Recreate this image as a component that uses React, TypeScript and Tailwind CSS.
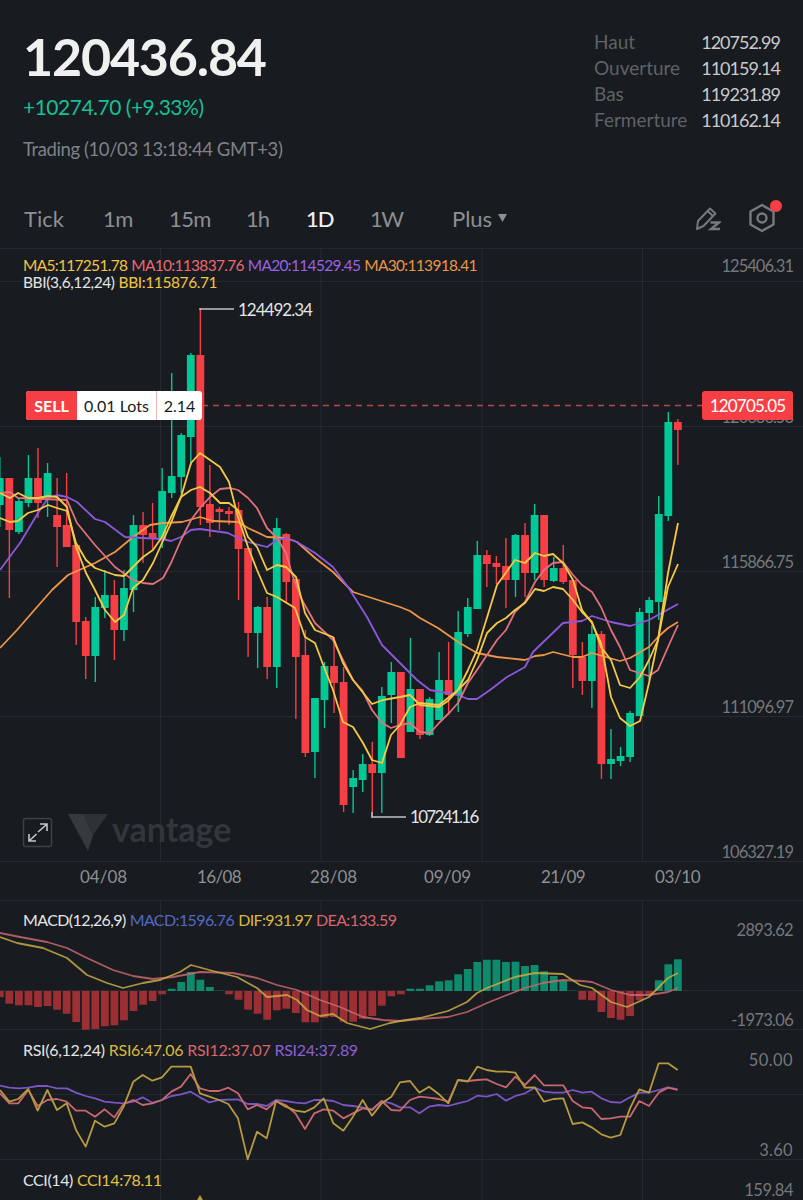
type Pt = [number, number]

// [high, bodyTop, bodyBottom, low, colour] in page pixels, oldest first
const candles: [number, number, number, number, 'g' | 'r'][] = [
  [457, 478, 505, 527, 'g'], [478, 478, 530, 598, 'r'], [499, 501, 532, 534, 'g'], [455, 478, 503, 507, 'g'],
  [448, 478, 503, 518, 'r'], [463, 473, 498, 517, 'g'], [478, 515, 527, 567, 'r'], [473, 525, 547, 547, 'r'],
  [545, 545, 622, 645, 'r'], [617, 621, 656, 679, 'r'], [597, 607, 656, 682, 'g'], [570, 595, 608, 618, 'g'],
  [580, 595, 630, 660, 'r'], [570, 588, 630, 641, 'g'], [515, 525, 590, 612, 'g'], [512, 525, 535, 563, 'r'],
  [503, 533, 538, 550, 'r'], [468, 491, 540, 548, 'g'], [373, 476, 493, 498, 'g'], [433, 435, 477, 493, 'g'],
  [353, 355, 437, 465, 'g'], [308, 355, 507, 525, 'r'], [465, 504, 523, 537, 'r'], [507, 509, 512, 530, 'r'],
  [507, 511, 514, 525, 'r'], [502, 510, 549, 600, 'r'], [548, 548, 633, 657, 'r'], [606, 607, 633, 668, 'g'],
  [597, 607, 667, 679, 'r'], [518, 528, 667, 688, 'g'], [533, 534, 582, 602, 'r'], [579, 579, 657, 719, 'r'],
  [630, 655, 753, 757, 'r'], [698, 698, 752, 778, 'g'], [662, 666, 700, 728, 'g'], [637, 666, 683, 713, 'r'],
  [667, 682, 805, 812, 'r'], [770, 778, 787, 813, 'g'], [754, 764, 780, 792, 'g'], [742, 764, 773, 818, 'r'],
  [687, 696, 773, 813, 'g'], [662, 672, 695, 723, 'g'], [672, 672, 758, 758, 'r'], [638, 689, 732, 732, 'g'],
  [689, 689, 735, 739, 'r'], [697, 699, 735, 736, 'g'], [652, 680, 720, 720, 'g'], [642, 680, 695, 715, 'r'],
  [611, 632, 695, 712, 'g'], [598, 607, 634, 637, 'g'], [541, 555, 609, 609, 'g'], [550, 555, 564, 587, 'r'],
  [556, 563, 567, 584, 'r'], [538, 566, 580, 608, 'r'], [534, 535, 580, 597, 'g'], [523, 535, 573, 597, 'r'],
  [504, 515, 573, 580, 'g'], [515, 515, 580, 587, 'r'], [557, 568, 581, 582, 'g'], [545, 568, 582, 584, 'r'],
  [580, 580, 655, 688, 'r'], [642, 657, 681, 695, 'r'], [625, 634, 681, 708, 'g'], [631, 634, 764, 779, 'r'],
  [729, 759, 764, 779, 'g'], [747, 756, 761, 766, 'g'], [711, 713, 757, 762, 'g'], [608, 612, 716, 716, 'g'],
  [597, 600, 613, 680, 'g'], [496, 514, 602, 620, 'g'], [412, 422, 516, 521, 'g'], [419, 422, 430, 465, 'r'],
]
const candleX = (i: number) => -0.2 + 9.55 * i

const ma5: Pt[] = [[0, 493], [10, 498], [18, 493], [28, 498], [38, 498], [48, 496], [57, 497], [67, 507], [76, 547], [86, 573], [95, 590], [105, 610], [115, 622], [124, 615], [133, 588], [143, 580], [153, 563], [162, 543], [171, 523], [181, 497], [191, 463], [200, 453], [220, 467], [229, 482], [238, 517], [248, 547], [257, 570], [267, 593], [277, 597], [295, 608], [305, 637], [315, 643], [324, 667], [333, 690], [343, 722], [353, 727], [363, 743], [372, 760], [382, 763], [391, 735], [400, 725], [410, 707], [420, 703], [439, 705], [448, 698], [458, 690], [468, 670], [477, 650], [497, 585], [515, 560], [525, 563], [535, 553], [544, 556], [553, 554], [563, 563], [573, 580], [582, 610], [592, 623], [601, 643], [611, 697], [620, 718], [630, 726], [640, 721], [649, 683], [658, 640], [668, 573], [678, 523]]
const bbi: Pt[] = [[0, 518], [10, 522], [18, 521], [28, 513], [38, 510], [48, 505], [57, 508], [67, 511], [76, 543], [86, 560], [95, 568], [115, 575], [124, 576], [133, 567], [143, 557], [153, 550], [162, 537], [171, 517], [181, 497], [191, 490], [200, 487], [210, 493], [220, 503], [229, 503], [238, 510], [248, 537], [257, 547], [267, 570], [277, 565], [286, 567], [296, 577], [305, 613], [315, 630], [333, 637], [343, 663], [353, 680], [372, 704], [383, 700], [400, 697], [410, 695], [420, 705], [439, 707], [448, 701], [458, 690], [468, 680], [477, 660], [487, 633], [497, 623], [506, 618], [515, 610], [525, 603], [535, 589], [544, 591], [553, 587], [563, 589], [573, 600], [582, 612], [592, 622], [601, 647], [611, 660], [620, 685], [630, 688], [640, 677], [649, 660], [658, 640], [668, 587], [678, 564]]
const ma10: Pt[] = [[0, 493], [10, 492], [18, 498], [67, 500], [77, 523], [95, 545], [115, 567], [133, 580], [143, 583], [153, 584], [163, 578], [171, 563], [181, 540], [191, 520], [200, 508], [210, 497], [220, 489], [230, 488], [238, 490], [248, 498], [257, 508], [267, 528], [277, 538], [286, 553], [293, 577], [302, 600], [315, 623], [333, 640], [343, 660], [353, 680], [362, 690], [372, 710], [382, 723], [391, 728], [400, 725], [410, 723], [420, 732], [430, 733], [439, 723], [450, 712], [458, 703], [468, 683], [477, 670], [497, 640], [506, 630], [515, 612], [525, 602], [535, 582], [544, 570], [553, 563], [563, 562], [573, 575], [582, 585], [592, 592], [601, 607], [611, 630], [620, 647], [630, 670], [649, 676], [658, 670], [668, 647], [678, 625]]
const ma20: Pt[] = [[0, 570], [20, 543], [38, 513], [48, 498], [57, 495], [67, 497], [77, 502], [95, 519], [105, 522], [125, 537], [143, 538], [162, 539], [171, 541], [181, 537], [191, 530], [200, 529], [228, 533], [238, 538], [248, 542], [267, 547], [277, 540], [286, 538], [297, 542], [315, 553], [333, 567], [348, 587], [367, 617], [382, 645], [400, 663], [417, 680], [430, 690], [458, 695], [468, 699], [477, 699], [490, 690], [507, 677], [525, 667], [533, 652], [563, 623], [582, 621], [592, 616], [611, 622], [630, 626], [649, 620], [658, 615], [678, 604]]
const ma30: Pt[] = [[0, 648], [17, 630], [37, 607], [52, 590], [68, 575], [95, 563], [115, 552], [133, 537], [150, 525], [163, 523], [182, 522], [200, 517], [213, 521], [238, 522], [248, 528], [267, 537], [286, 538], [297, 542], [315, 558], [333, 572], [348, 587], [353, 592], [400, 607], [410, 611], [420, 618], [438, 628], [458, 642], [477, 653], [497, 657], [525, 660], [535, 656], [544, 655], [553, 652], [573, 657], [582, 657], [592, 653], [620, 661], [630, 658], [649, 647], [658, 637], [668, 628], [678, 622]]

// positive hangs under the zero line (red), negative stands on it (green)
const macdBars = [6, 12.7, 14.3, 14.3, 16, 15, 18.7, 22.7, 31, 38.7, 38, 35.3, 34.3, 29.3, 20, 13.7, 10, 3.3, -2.3, -9, -19, -11.3, -4, -0.3, 3.3, 8.7, 18.7, 22.7, 28.7, 19.3, 17.7, 22, 31.3, 31.3, 26.7, 26, 30.7, 30.7, 27.7, 25, 14.7, 5.3, 3.3, -2.3, -2.3, -5.7, -9.7, -10.7, -16.7, -22, -29, -31.3, -31.3, -29, -29.3, -25, -26, -19.7, -15, -10.7, -0.3, 8.7, 9.3, 21, 27, 28.7, 25, 9.3, 4.3, -10.7, -26.7, -31.7]
const macdDea: Pt[] = [[0, 933], [20, 937], [47, 942], [67, 948], [87, 958], [113, 970], [133, 976], [153, 979], [173, 977], [200, 972], [233, 973], [257, 978], [277, 985], [297, 990], [320, 1000], [340, 1007], [363, 1017], [383, 1020], [400, 1021], [420, 1019], [448, 1017], [467, 1012], [487, 1003], [507, 995], [525, 988], [543, 983], [563, 980], [582, 981], [592, 982], [611, 990], [630, 995], [649, 995], [668, 992], [678, 988]]
const macdDif: Pt[] = [[0, 937], [17, 943], [43, 948], [67, 958], [87, 975], [107, 983], [123, 988], [143, 983], [160, 980], [180, 972], [191, 965], [213, 971], [237, 977], [257, 988], [267, 997], [287, 995], [297, 1000], [307, 1010], [320, 1016], [333, 1014], [347, 1023], [370, 1029], [390, 1023], [400, 1021], [420, 1018], [448, 1011], [467, 1002], [477, 993], [487, 988], [515, 977], [535, 973], [563, 974], [580, 985], [592, 988], [611, 1002], [627, 1007], [649, 997], [668, 978], [678, 973]]

const toPts = (z: number[], z2: number[]): Pt[] => {
  const a: Pt[] = []
  for (let i = 0; i < z.length; i += 2) a.push([z[i] / 3, 900 + z[i + 1] / 3])
  for (let i = 0; i < z2.length; i += 2) a.push([400 + z2[i] / 3, 900 + z2[i + 1] / 3])
  return a
}
const rsi6 = toPts(
  [0, 570, 28, 605, 55, 597, 85, 567, 113, 632, 142, 570, 171, 630, 200, 610, 228, 690, 257, 740, 285, 662, 314, 680, 343, 670, 371, 620, 400, 545, 428, 525, 457, 542, 486, 532, 514, 500, 543, 500, 572, 500, 600, 580, 628, 590, 657, 600, 685, 612, 714, 655, 743, 778, 771, 695, 800, 715, 828, 603, 857, 620, 886, 632, 915, 636, 943, 622, 971, 595, 1000, 670, 1030, 692, 1059, 650, 1088, 600, 1116, 647, 1145, 610, 1174, 590],
  [0, 547, 30, 543, 58, 578, 87, 560, 116, 582, 145, 610, 174, 540, 203, 545, 232, 500, 260, 510, 290, 515, 318, 515, 346, 518, 375, 563, 404, 562, 432, 605, 460, 597, 490, 595, 518, 672, 547, 667, 575, 682, 604, 703, 632, 713, 661, 705, 690, 625, 718, 568, 747, 578, 776, 490, 804, 490, 833, 510],
)
const rsi12 = toPts(
  [0, 580, 28, 610, 55, 610, 85, 570, 113, 618, 142, 600, 171, 597, 200, 605, 228, 632, 257, 632, 285, 650, 314, 628, 343, 652, 371, 612, 400, 600, 428, 615, 457, 610, 486, 600, 514, 575, 543, 560, 572, 522, 600, 565, 628, 573, 657, 573, 685, 563, 714, 580, 743, 628, 771, 615, 800, 628, 828, 603, 857, 615, 886, 640, 915, 687, 943, 640, 971, 628, 1000, 632, 1030, 655, 1059, 640, 1088, 625, 1116, 630, 1145, 603, 1174, 630],
  [0, 632, 30, 600, 58, 590, 87, 593, 116, 597, 145, 605, 174, 540, 203, 543, 232, 540, 260, 538, 290, 552, 318, 562, 346, 530, 375, 555, 404, 525, 432, 556, 460, 556, 490, 556, 518, 603, 547, 622, 575, 625, 604, 657, 632, 655, 661, 650, 690, 650, 718, 603, 747, 618, 776, 578, 804, 563, 833, 570],
)
const rsi24 = toPts(
  [0, 557, 28, 563, 57, 565, 85, 563, 113, 558, 142, 558, 171, 565, 200, 565, 228, 578, 257, 588, 285, 595, 314, 605, 343, 608, 371, 610, 400, 605, 428, 592, 457, 608, 486, 600, 514, 588, 543, 583, 572, 575, 600, 592, 628, 607, 657, 600, 714, 598, 743, 612, 771, 612, 800, 618, 828, 600, 857, 603, 886, 608, 915, 610, 943, 600, 971, 600, 1000, 603, 1030, 615, 1059, 618, 1088, 622, 1116, 628, 1145, 603, 1174, 610],
  [0, 622, 30, 622, 58, 640, 87, 620, 116, 615, 145, 618, 174, 610, 203, 603, 232, 587, 260, 590, 290, 582, 318, 602, 346, 588, 375, 580, 404, 563, 432, 575, 460, 578, 490, 578, 518, 570, 547, 578, 575, 575, 604, 595, 632, 606, 661, 608, 690, 592, 718, 578, 747, 578, 776, 570, 804, 562, 833, 568],
)

const path = (pts: Pt[]) => pts.map(p => p.join(',')).join(' ')
const GRID = '#262a30'
const verticals = [160.5, 321, 482, 642.5]

function Line({ pts, color, opacity = 1 }: { pts: Pt[]; color: string; opacity?: number }) {
  return <polyline points={path(pts)} fill="none" stroke={color} strokeWidth="1.8" strokeLinejoin="round" opacity={opacity} />
}

function AxisLabel({ className, children }: { className: string; children: string }) {
  return <span className={`absolute right-[10px] text-[16.5px] leading-5 text-[#75787c] ${className}`}>{children}</span>
}

function MainChart() {
  return (
    <div className="relative h-[652px] shrink-0">
      <svg viewBox="0 248 803 652" className="block w-[803px] h-[652px]">
        {[248.5, 281.5, 426.5, 571.5, 716.5, 861.5].map(y => <line key={y} x1="0" x2="803" y1={y} y2={y} stroke={GRID} />)}
        {verticals.map(x => <line key={x} x1={x} x2={x} y1="248" y2="862" stroke={GRID} />)}
        <line x1="202" x2="702" y1="405.5" y2="405.5" stroke="#b8454c" strokeWidth="1.3" strokeDasharray="6 5" />
        {candles.map(([hi, top, bot, lo, c], i) => {
          const fill = c === 'g' ? '#00c896' : '#f63f45'
          const x = candleX(i)
          return (
            <g key={i} fill={fill}>
              <rect x={x - 0.7} y={hi} width="1.4" height={lo - hi} />
              <rect x={x - 3.9} y={top} width="7.8" height={bot - top} />
            </g>
          )
        })}
        <Line pts={ma30} color="#ee9548" />
        <Line pts={ma20} color="#8c58dc" />
        <Line pts={ma10} color="#e2717c" />
        <Line pts={bbi} color="#f6c944" />
        <Line pts={ma5} color="#f6c944" />
        <path d="M200 310V309H234" fill="none" stroke="#bfc1c3" strokeWidth="1.5" />
        <path d="M372 812V817H406" fill="none" stroke="#bfc1c3" strokeWidth="1.5" />
        {/* watermark */}
        <path d="M68 814H84L93 835L88 851Z" fill="#36393e" />
        <path d="M84 814H108L93 835Z" fill="#2e3136" />
        {/* expand */}
        <rect x="23.5" y="818.5" width="28" height="28" rx="2" fill="none" stroke="#3d4045" strokeWidth="1.5" />
        <path d="M38 832L46.5 824.5M40 824H47V831M29 834V841H36M29 841L36.5 834" fill="none" stroke="#c4c6c8" strokeWidth="1.6" />
      </svg>

      <div className="absolute left-[23px] top-[9px] text-[15.5px] leading-[17px]">
        <div className="flex gap-[4px] tracking-[-0.7px]">
          <span className="text-[#f4c542]">MA5:117251.78</span>
          <span className="text-[#ea6a73]">MA10:113837.76</span>
          <span className="text-[#9a62e6]">MA20:114529.45</span>
          <span className="text-[#ee9548]">MA30:113918.41</span>
        </div>
        <div className="flex gap-[4px] tracking-[-0.4px]">
          <span className="text-[#e4e5e6]">BBI(3,6,12,24)</span>
          <span className="text-[#f4c542]">BBI:115876.71</span>
        </div>
      </div>

      <AxisLabel className="top-[8px] tracking-[-1px]">125406.31</AxisLabel>
      <AxisLabel className="top-[159px] tracking-[-1px]">120636.53</AxisLabel>
      <AxisLabel className="top-[304px] tracking-[-1px]">115866.75</AxisLabel>
      <AxisLabel className="top-[449px] tracking-[-1px]">111096.97</AxisLabel>
      <AxisLabel className="top-[594px] tracking-[-1px]">106327.19</AxisLabel>

      <span className="absolute left-[238px] top-[52px] text-[17px] leading-5 tracking-[-1px] text-[#e4e5e6]">124492.34</span>
      <span className="absolute left-[410px] top-[559px] text-[17px] leading-5 tracking-[-1.7px] text-[#e4e5e6]">107241.16</span>

      <div className="absolute left-[26px] top-[143px] flex h-[29px] w-[176px] items-center overflow-hidden rounded-[3px] bg-white text-[16px]">
        <span className="flex h-full w-[51px] items-center justify-center bg-[#f63f45] font-bold text-white">SELL</span>
        <span className="flex h-full w-[80px] items-center justify-center border-r border-[#e9b4b6] text-[#181b20]">0.01 Lots</span>
        <span className="flex-1 text-center text-[#181b20]">2.14</span>
      </div>
      <div className="absolute right-[10px] top-[143px] flex h-[29px] w-[91px] items-center justify-center rounded-[3px] bg-[#f63f45] text-[17px] tracking-[-0.8px] text-white">120705.05</div>

      <span className="absolute left-[112px] top-[561px] text-[34px] leading-[40px] font-bold text-[#33363b]">vantage</span>

      <div className="absolute inset-x-0 top-[619px] text-[17px] leading-5 text-[#8d9094]">
        <span className="absolute left-[80px]">04/08</span>
        <span className="absolute left-[197px] tracking-[-0.6px]">16/08</span>
        <span className="absolute left-[310px]">28/08</span>
        <span className="absolute left-[424px]">09/09</span>
        <span className="absolute left-[541px] tracking-[-0.6px]">21/09</span>
        <span className="absolute left-[655px] tracking-[-0.4px]">03/10</span>
      </div>
    </div>
  )
}

function LowerPanels() {
  return (
    <div className="relative h-[300px] shrink-0">
      <svg viewBox="0 900 803 300" className="block w-[803px] h-[300px]">
        {[900.5, 990.5, 1029.5, 1094.5, 1159.5].map(y => <line key={y} x1="0" x2="803" y1={y} y2={y} stroke={GRID} />)}
        {verticals.map(x => <line key={x} x1={x} x2={x} y1="900" y2="1200" stroke={GRID} />)}
        {macdBars.map((v, i) => (
          <rect key={i} x={candleX(i) - 3.9} width="7.8" y={v < 0 ? 991 + v : 991} height={Math.abs(v)} fill={v < 0 ? '#0f8a6c' : '#9c2f33'} />
        ))}
        <Line pts={macdDea} color="#c9676f" opacity={0.85} />
        <Line pts={macdDif} color="#c8aa45" opacity={0.85} />
        <Line pts={rsi24} color="#7a55c4" />
        <Line pts={rsi12} color="#c9676f" />
        <Line pts={rsi6} color="#b59a3f" />
        <path d="M197 1200L200 1195L203 1200Z" fill="#b59a3f" />
      </svg>

      <div className="absolute left-[23px] top-[10px] flex gap-[4px] text-[16px] leading-5 tracking-[-0.6px]">
        <span className="text-[#e4e5e6]">MACD(12,26,9)</span>
        <span className="text-[#5468c8]">MACD:1596.76</span>
        <span className="text-[#d9b840]">DIF:931.97</span>
        <span className="text-[#d9656d]">DEA:133.59</span>
      </div>
      <div className="absolute left-[23px] top-[140px] flex gap-[4px] text-[16px] leading-5 tracking-[-0.3px]">
        <span className="text-[#e4e5e6]">RSI(6,12,24)</span>
        <span className="text-[#d9b840]">RSI6:47.06</span>
        <span className="text-[#d9656d]">RSI12:37.07</span>
        <span className="text-[#8c5fd8]">RSI24:37.89</span>
      </div>
      <div className="absolute left-[23px] top-[270px] flex gap-[4px] text-[16px] leading-5 tracking-[-0.4px]">
        <span className="text-[#e4e5e6]">CCI(14)</span>
        <span className="text-[#e6c244]">CCI14:78.11</span>
      </div>

      <AxisLabel className="top-[20px] tracking-[-0.7px]">2893.62</AxisLabel>
      <AxisLabel className="top-[110px] tracking-[-0.7px]">-1973.06</AxisLabel>
      <AxisLabel className="top-[150px] tracking-[0.4px]">50.00</AxisLabel>
      <AxisLabel className="top-[240px] tracking-[0.3px]">3.60</AxisLabel>
      <AxisLabel className="top-[280px] tracking-[-0.5px]">159.84</AxisLabel>
    </div>
  )
}

const stats = [
  ['Haut', '120752.99'],
  ['Ouverture', '110159.14'],
  ['Bas', '119231.89'],
  ['Fermerture', '110162.14'],
]
const ranges = [
  ['Tick', 'w-[79px]'],
  ['1m', 'w-[66px] tracking-[-0.6px]'],
  ['15m', 'w-[77px] tracking-[-0.6px]'],
  ['1h', 'w-[60px] tracking-[-1px]'],
  ['1D', 'w-[64px] tracking-[-1px] font-medium text-[#f0f0f1]'],
  ['1W', 'w-[82px] tracking-[-1.5px]'],
]

export default function App() {
  return (
    <div className="flex h-[1200px] w-[803px] flex-col overflow-hidden bg-[#181b20] font-['Lato',sans-serif]">
      <header className="flex h-[182px] shrink-0 justify-between pl-[23px] pr-[23px] pt-[29px]">
        <div>
          <div className="text-[52px] leading-[54px] tracking-[-1.2px] font-bold text-[#f0f0f1]">120436.84</div>
          <div className="mt-[12px] text-[21px] leading-6 tracking-[-0.5px] text-[#16c098]">+10274.70 (+9.33%)</div>
          <div className="mt-[18px] text-[18.5px] leading-6 tracking-[-0.4px] text-[#7f8286]">Trading (10/03 13:18:44 GMT+3)</div>
        </div>
        <div className="w-[186px]">
          {stats.map(([k, v]) => (
            <div key={k} className="flex h-[26px] items-center justify-between">
              <span className="text-[19px] text-[#5f6266]">{k}</span>
              <span className="text-[18px] tracking-[-1px] text-[#c8cacc]">{v}</span>
            </div>
          ))}
        </div>
      </header>

      <nav className="flex h-[66px] shrink-0 items-center pl-[24px] pr-[27px] pt-[6px] text-[22px] text-[#8c8f93]">
        {ranges.map(([r, w]) => (
          <span key={r} className={w}>{r}</span>
        ))}
        <span className="flex items-center gap-[6px]">
          Plus
          <svg width="9" height="8" viewBox="0 0 9 8"><path d="M0 0H9L4.5 8Z" fill="#8c8f93" /></svg>
        </span>
        <div className="ml-auto flex items-center gap-[27px]">
          <svg width="26" height="26" viewBox="0 0 26 26" fill="none" stroke="#76797d" strokeWidth="2">
            <path d="M2 24L3 16L15 3.5L20.5 8.5L8.5 21L2 24Z" strokeLinejoin="round" />
            <path d="M12.5 6L18 11" />
            <path d="M15.5 17.5H24L16 24H25" strokeWidth="2.4" />
          </svg>
          <div className="relative h-[30px] w-[28px]">
            <svg width="28" height="30" viewBox="0 0 28 30" fill="none" stroke="#76797d" strokeWidth="2.4">
              <path d="M14 2L25.5 8.5V21.5L14 28L2.5 21.5V8.5Z" strokeLinejoin="round" />
              <circle cx="14" cy="15" r="4.5" />
            </svg>
            <span className="absolute right-[-6px] top-[-3px] h-[12px] w-[12px] rounded-full bg-[#f63f45]" />
          </div>
        </div>
      </nav>

      <MainChart />
      <LowerPanels />
    </div>
  )
}
